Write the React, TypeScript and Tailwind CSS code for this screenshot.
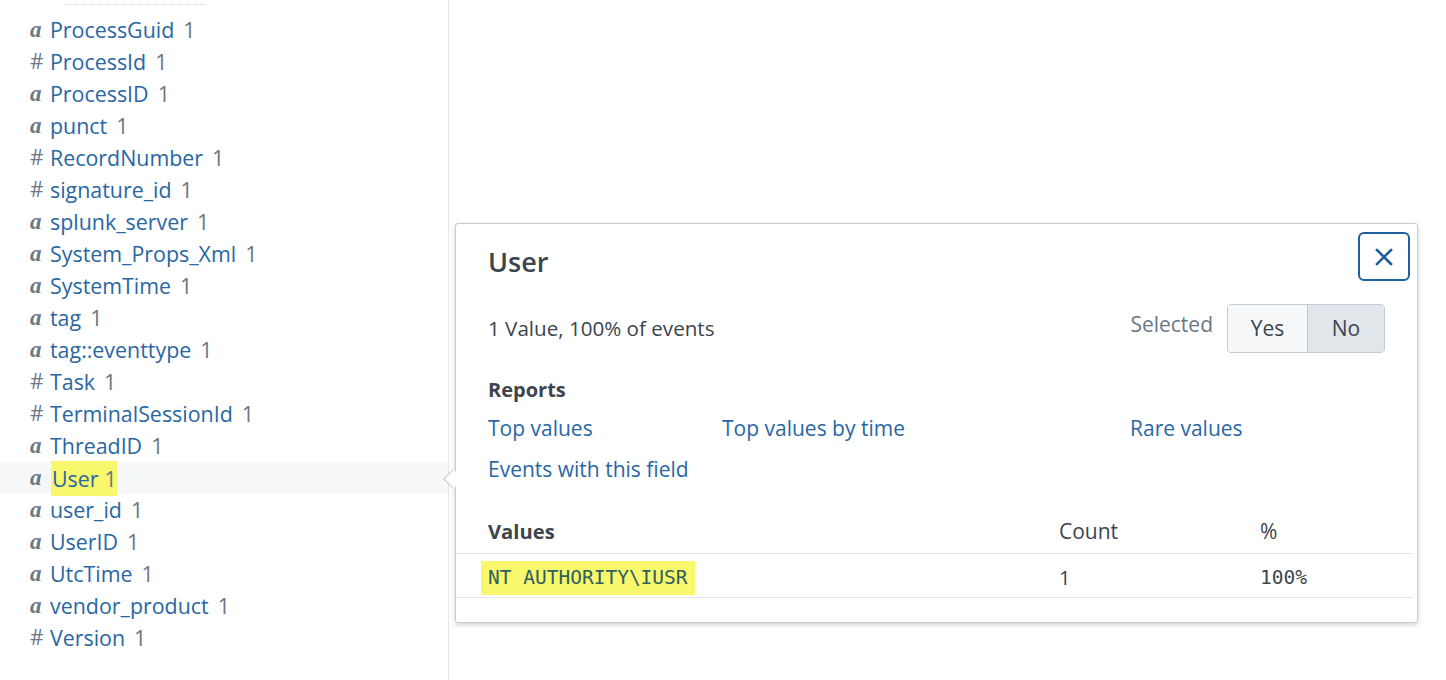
import React from 'react';

type Field = { name: string; kind: 'a' | '#' };

const fields: Field[] = [
  { name: 'ProcessGuid', kind: 'a' },
  { name: 'ProcessId', kind: '#' },
  { name: 'ProcessID', kind: 'a' },
  { name: 'punct', kind: 'a' },
  { name: 'RecordNumber', kind: '#' },
  { name: 'signature_id', kind: '#' },
  { name: 'splunk_server', kind: 'a' },
  { name: 'System_Props_Xml', kind: 'a' },
  { name: 'SystemTime', kind: 'a' },
  { name: 'tag', kind: 'a' },
  { name: 'tag::eventtype', kind: 'a' },
  { name: 'Task', kind: '#' },
  { name: 'TerminalSessionId', kind: '#' },
  { name: 'ThreadID', kind: 'a' },
  { name: 'User', kind: 'a' },
  { name: 'user_id', kind: 'a' },
  { name: 'UserID', kind: 'a' },
  { name: 'UtcTime', kind: 'a' },
  { name: 'vendor_product', kind: 'a' },
  { name: 'Version', kind: '#' },
];

const sans = "font-['Open_Sans','Lato',sans-serif]";

function FieldRow({ field }: { field: Field }) {
  const active = field.name === 'User';
  return (
    <div className={`flex h-8 items-center pl-[30px] ${active ? 'bg-[#f5f7f9]' : ''}`}>
      <span className="w-[20px] text-[#6b7785]">
        {field.kind === 'a' ? (
          <span className="font-['Liberation_Serif',serif] text-[23px] font-bold italic">a</span>
        ) : (
          <span className="text-[21px]">#</span>
        )}
      </span>
      <span className={`text-[21.4px] text-[#2867a4] ${active ? 'ml-[1px] bg-[#f9f76c] pl-[1px] leading-[35px]' : ''}`}>
        {field.name}
        <span className={`text-[#6b7785] ${active ? 'ml-[6px]' : 'ml-[9px]'}`}>1</span>
      </span>
    </div>
  );
}

function CloseIcon() {
  return (
    <svg width="20" height="20" viewBox="0 0 20 20" fill="none" stroke="#1f5f9e" strokeWidth="2.6" strokeLinecap="square">
      <path d="M3 3 L17 17 M17 3 L3 17" />
    </svg>
  );
}

export default function App() {
  return (
    <div className={`flex h-[680px] w-[1446px] overflow-hidden bg-white ${sans}`}>
      <aside className="w-[449px] shrink-0 border-r border-[#e1e6eb] pt-[13px]">
        <div className="-mt-[9px] mb-[9px] ml-[65px] w-[140px] border-t border-dotted border-[#d5dae0]" />
        {fields.map((f) => (
          <FieldRow key={f.name} field={f} />
        ))}
      </aside>

      <main className="relative flex-1">
        <div className="absolute left-[6px] top-[223px] w-[963px] rounded-[3px] border border-[#c3cbd4] bg-white pb-[24px] shadow-[0_2px_5px_rgba(0,0,0,0.18)]">
          <div className="absolute -left-[10px] top-[248px] h-[14px] w-[14px] rotate-45 border-b border-l border-[#c3cbd4] bg-white" />

          <button className="absolute right-[7px] top-[8px] flex h-[49px] w-[52px] items-center justify-center rounded-[6px] border-2 border-[#1f5f9e] bg-white">
            <CloseIcon />
          </button>

          <div className="px-[32px] pt-[22px]">
            <h2 className="h-8 text-[27px] font-semibold leading-8 text-[#3c444d]">User</h2>

            <div className="mt-[26px] flex h-[49px] items-center justify-between">
              <span className="text-[20.6px] text-[#3c444d]">1 Value, 100% of events</span>
              <div className="flex items-center gap-[14px]">
                <span className="-mt-[8px] text-[21px] text-[#6b7785]">Selected</span>
                <div className="flex h-[49px] overflow-hidden rounded-[4px] border border-[#c3cbd4] text-[21px] text-[#3c444d]">
                  <button className="w-[80px] border-r border-[#c3cbd4] bg-[#f7f8fa]">Yes</button>
                  <button className="w-[76px] bg-[#e1e6eb]">No</button>
                </div>
              </div>
            </div>

            <h3 className="mt-[25px] text-[20px] font-bold leading-6 text-[#3c444d]">Reports</h3>
            <div className="mt-[14px] grid grid-cols-[234px_408px_1fr] gap-y-[17px] text-[21px] leading-6 text-[#2867a4]">
              <a>Top values</a>
              <a>Top values by time</a>
              <a>Rare values</a>
              <a>Events with this field</a>
            </div>
          </div>

          <div className="mr-[4px] mt-[38px]">
            <div className="grid grid-cols-[603px_201px_1fr] border-b border-[#e1e6eb] pb-[10px] text-[21px] leading-6 text-[#3c444d]">
              <span className="pl-[32px] text-[20.2px] font-bold">Values</span>
              <span>Count</span>
              <span>%</span>
            </div>
            <div className="grid grid-cols-[603px_201px_1fr] items-center border-b border-[#e1e6eb] pb-[2px] pt-[7px] font-['DejaVu_Sans_Mono',monospace] text-[19.5px] text-[#3c444d]">
              <span className="pl-[25px]">
                <span className="inline-block h-[34px] bg-[#f9f76c] px-[7px] leading-[34px] text-[#2f5e5e]">NT AUTHORITY\IUSR</span>
              </span>
              <span className={`${sans} text-[20px]`}>1</span>
              <span>100%</span>
            </div>
          </div>
        </div>
      </main>
    </div>
  );
}
